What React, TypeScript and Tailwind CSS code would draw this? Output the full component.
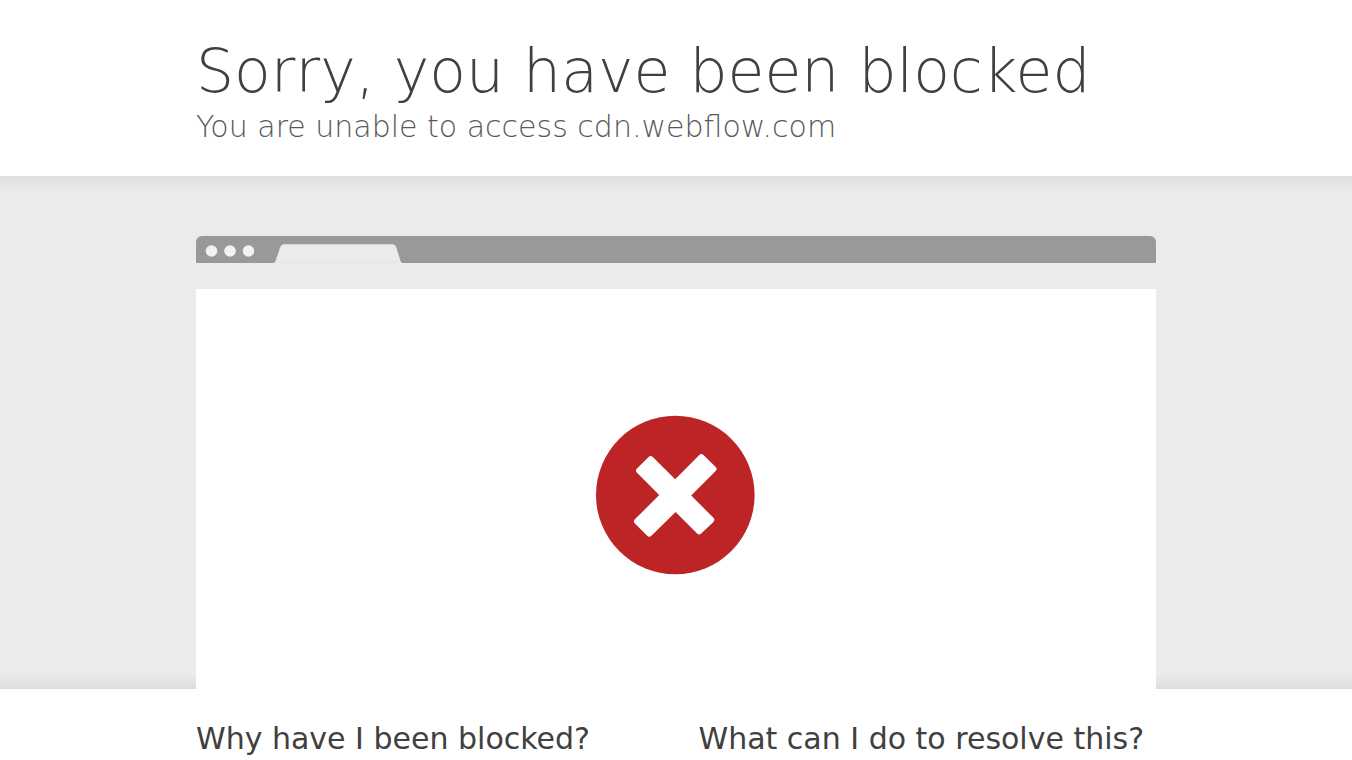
function BrowserBar() {
  return (
    <div className="flex h-[27px] items-center rounded-t-md bg-[#999999] pl-[9px]">
      <svg className="h-[27px] w-[200px]" viewBox="0 0 200 27" aria-hidden="true">
        <g fill="#f2f2f2">
          <circle cx="6.5" cy="15" r="5.8" />
          <circle cx="25" cy="15" r="5.8" />
          <circle cx="43.5" cy="15" r="5.8" />
        </g>
        <path
          d="M69 27 Q70 26.5 70.7 24.5 L75.3 11 Q76.3 8.3 78.5 8.3 H188 Q190.2 8.3 191.1 11 L195.4 24.5 Q196 26.5 197 27 Z"
          fill="#ebebeb"
        />
        <path d="M69 26.7 H197" stroke="#dedede" strokeWidth="0.6" />
      </svg>
    </div>
  );
}

function BlockedIcon() {
  return (
    <svg className="size-40" viewBox="0 0 160 160" role="img" aria-label="Blocked">
      <circle cx="79.3" cy="80" r="79.3" fill="#bd2426" />
      <path
        d="M41 53.6 L52.6 42 Q54.7 40 56.8 42 L79.2 64.2 L103.3 40 Q105.4 38 107.5 40 L119.7 52 Q121.7 54 119.7 56 L95.2 80.5 L117.4 102.7 Q119.4 104.8 117.4 106.9 L105.2 118.6 Q103.2 120.6 101.1 118.6 L79.6 97 L55.4 120.7 Q53.3 122.7 51.2 120.7 L38.9 108.5 Q36.9 106.4 38.9 104.3 L63.2 80 L41 57.8 Q39 55.7 41 53.6 Z"
        fill="#fff"
      />
    </svg>
  );
}

export default function App() {
  return (
    <div className="bg-white font-['DejaVu_Sans',sans-serif] text-[#404040]">
      <header className="mx-auto w-full max-w-[960px] pt-10 pb-[30px]">
        <h1 className="text-[60px] leading-[62px] font-extralight">Sorry, you have been blocked</h1>
        <h2 className="mt-[5px] text-[30px] leading-[39px] font-extralight text-[#595959]">
          You are unable to access cdn.webflow.com
        </h2>
      </header>

      <section className="bg-[#ebebeb] bg-[linear-gradient(to_bottom,#dedede,#ebebeb_3%,#ebebeb_97%,#dedede)] pt-[60px]">
        <div className="mx-auto w-full max-w-[960px]">
          <BrowserBar />
          <div className="mt-[26px] flex justify-center bg-white pt-[126px] pb-[114px]">
            <BlockedIcon />
          </div>
        </div>
      </section>

      <main className="mx-auto grid w-full max-w-[960px] grid-cols-2 gap-[45px] pt-[30px]">
        <h2 className="text-[30px] leading-[39px] whitespace-nowrap">Why have I been blocked?</h2>
        <h2 className="text-[30px] leading-[39px] whitespace-nowrap">What can I do to resolve this?</h2>
      </main>
    </div>
  );
}
